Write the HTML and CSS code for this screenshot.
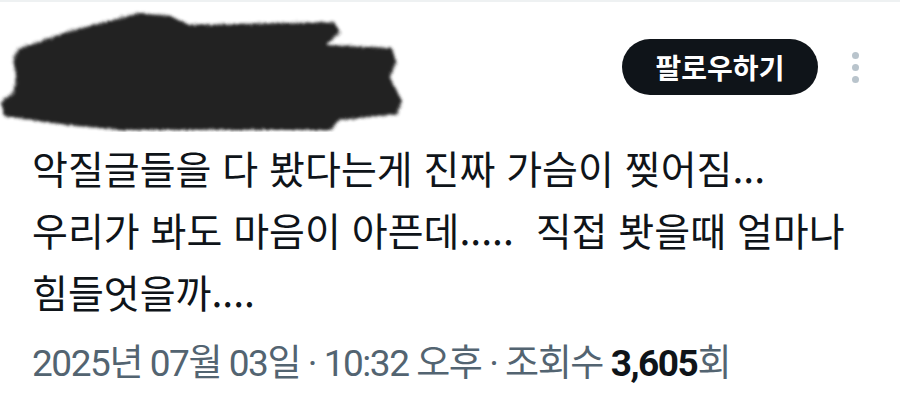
FILE: index.html
```html
<!DOCTYPE html>
<html lang="ko">
<head>
    <meta charset="UTF-8">
    <meta name="viewport" content="width=device-width, initial-scale=1.0">
    <title>트윗</title>
    <link rel="stylesheet" href="styles.css">
</head>
<body>
    <div class="tweet">
        <div class="tweet-header">
            <svg class="redacted" width="405" height="130" viewBox="0 0 405 130">
                <defs>
                    <filter id="rough" x="-5%" y="-10%" width="110%" height="120%">
                        <feTurbulence type="fractalNoise" baseFrequency="1.2" numOctaves="2" result="noise"/>
                        <feDisplacementMap in="SourceGraphic" in2="noise" scale="6"/>
                        <feGaussianBlur stdDeviation="1.6"/>
                    </filter>
                </defs>
                <polygon filter="url(#rough)" fill="#222"
                    points="50,36 70,29 140,11 170,14 190,23 334,20 340,30 326,43 392,46 396,60 390,75 396,88 402,99 397,112 340,118 330,128 120,128 60,122 4,114 1,100 14,90 16,75 13,58 18,47"/>
            </svg>
            <button class="follow-btn">팔로우하기</button>
            <div class="more">
                <span></span><span></span><span></span>
            </div>
        </div>

        <p class="tweet-text">악질글들을 다 봤다는게 진짜 가슴이 찢어짐...<br>우리가 봐도 마음이 아픈데.....&nbsp; 직접 봣을때 얼마나<br>힘들엇을까....</p>

        <div class="tweet-meta">2025년 07월 03일 · 10:32 오후 · 조회수 <b>3,605</b>회</div>
    </div>
</body>
</html>
```

FILE: styles.css
```css
* {
    margin: 0;
    padding: 0;
    box-sizing: border-box;
}

body {
    background: #fff;
    font-family: Roboto, "Noto Sans CJK KR", sans-serif;
    color: #0f1419;
}

.tweet {
    width: 900px;
    height: 410px;
    border-top: 2px solid #eef1f2;
    overflow: hidden;
}

.tweet-header {
    display: flex;
    align-items: center;
    height: 130px;
}

.redacted {
    display: block;
    flex-shrink: 0;
}

.follow-btn {
    margin-left: auto;
    width: 196px;
    height: 56px;
    border: none;
    border-radius: 28px;
    background: #0f1419;
    color: #fff;
    font-family: "Noto Sans CJK KR", sans-serif;
    font-weight: 700;
    font-size: 28px;
}

.more {
    display: flex;
    flex-direction: column;
    gap: 5px;
    margin: 0 41px 0 34px;
}

.more span {
    width: 7px;
    height: 7px;
    border-radius: 50%;
    background: #b9c4cc;
}

.tweet-text {
    margin-top: 4px;
    padding: 0 32px;
    font-family: "Noto Sans CJK KR", sans-serif;
    font-size: 39px;
    line-height: 62px;
}

.tweet-meta {
    margin-top: 20px;
    padding: 0 32px;
    font-size: 37px;
    line-height: 44px;
    letter-spacing: -1.45px;
    color: #536471;
}

.tweet-meta b {
    color: #0f1419;
    font-weight: 700;
}
```
